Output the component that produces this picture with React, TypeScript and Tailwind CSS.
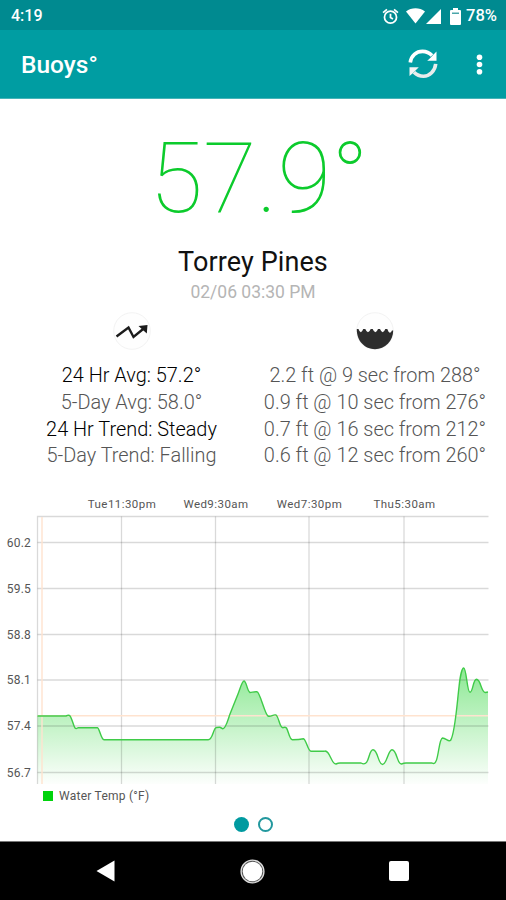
/**
 * Buoy detail screen
 * Current water temperature, averages, swell readings and a history chart
 */

import type { ReactNode } from 'react';

const averages = [
  { text: '24 Hr Avg: 57.2°', strong: true },
  { text: '5-Day Avg: 58.0°', strong: false },
  { text: '24 Hr Trend: Steady', strong: true },
  { text: '5-Day Trend: Falling', strong: false },
];

const swells = [
  { text: '2.2 ft @ 9 sec from 288°', strong: false },
  { text: '0.9 ft @ 10 sec from 276°', strong: false },
  { text: '0.7 ft @ 16 sec from 212°', strong: false },
  { text: '0.6 ft @ 12 sec from 260°', strong: false },
];

const xTicks = [
  { x: 121.5, label: 'Tue11:30pm' },
  { x: 215.5, label: 'Wed9:30am' },
  { x: 309, label: 'Wed7:30pm' },
  { x: 404, label: 'Thu5:30am' },
];

const yTicks = [
  { y: 52.5, label: '60.2' },
  { y: 98.5, label: '59.5' },
  { y: 144.5, label: '58.8' },
  { y: 190, label: '58.1' },
  { y: 236, label: '57.4' },
  { y: 282.5, label: '56.7' },
];

const tempLine =
  'M37.5 226H66C70 224 70.500 225.500 73 233C75 239 75.500 239.500 78 237.700H97.500C99.500 238 101 249.700 104 249.700H208' +
  'C213 250 213 238 216.500 237.500C220 237 220 237 222.500 238.700C226 239 228 229 230 224L238 204C240 199 242 191 244 191' +
  'C246.500 191 247 201 250 202.500C252 202.500 254 201.500 257 201.800C260 202 265 225 268 226C271 227.500 273 224 276 225' +
  'C279 227 279.500 238 283 237.700C284 237.200 285.500 237 286.500 238C288.500 241 289.500 250 292.500 249.700C297 249.700 300 249.500 303.500 248.700' +
  'C306 249 308 261.500 311 261.300H324C330 259 331 274.500 336 274C338 273 338 273 340 273H361C370 278 368 259.700 373 259.700' +
  'C378 259.700 378 274.500 382.500 274.500C387 274.500 388 259.700 392 259.700C397 259.700 397 274.500 401.500 274C404 273 404 273 406 273H432' +
  'C439 278 438 249 442.500 248C446 248 448 252 450.500 250.500C455 244 457 214 459 197C460 187 462 178 463.700 178' +
  'C466.500 178 467 202.300 470 202.300C473 202.300 473 189.300 476.500 189.300C481 189.300 481 203 485.500 202.500L488 202';

function AlarmIcon() {
  return (
    <svg width="17" height="17" viewBox="0 0 24 24" fill="none" stroke="#fff" strokeWidth="2.500">
      <circle cx="12" cy="13" r="8.500" />
      <path d="M12 8v5.500l3.500 2M1.500 6.500l5.500-4.500M22.500 6.500l-5.500-4.500" />
    </svg>
  );
}

function RefreshIcon() {
  return (
    <svg width="30" height="30" viewBox="0 0 30 30" fill="none">
      <path d="M2.300 13.500C3 6.500 8.500 2.400 14.500 2.400C18.500 2.400 21.500 3.800 24 6.500" stroke="#fff" strokeWidth="3.600" />
      <path d="M28.500 2.500V11.800H19.200L22 9.200L25.500 5.500Z" fill="#fff" />
      <path d="M27.700 14.800C27 22 21.500 27.300 15.500 27.300C11.500 27.300 8.500 25.800 6 23.300" stroke="#e8ecec" strokeWidth="3.600" />
      <path d="M1.500 27V18.300H10.800L8 21L4.500 24.500Z" fill="#f2f4f4" />
    </svg>
  );
}

function TrendIcon() {
  return (
    <svg width="38" height="38" viewBox="0 0 38 38" fill="none">
      <circle cx="19" cy="19" r="18.300" fill="#fefefe" stroke="#f3f3f3" />
      <path d="M3.500 24.500L15.500 15.500L20.500 25L32 15.500" stroke="#1b1b1b" strokeWidth="2.400" />
      <path d="M25.500 14L34.500 13L33.800 21.500Z" fill="#1b1b1b" />
    </svg>
  );
}

function WaveIcon() {
  return (
    <svg width="38" height="38" viewBox="0 0 38 38">
      <circle cx="19" cy="19" r="18.300" fill="#fefefe" stroke="#f3f3f3" />
      <path
        d="M.8 17L2.500 17Q4.800 23.500 7.200 17H9.300Q12 23.500 14.700 17H16.700Q19.400 23.500 22 17H24Q26.700 23.500 29.300 17H31.300Q33.500 23.500 36 18.500L37.200 18.500C37.300 29 29 37.200 19 37.200S.5 29 .8 17Z"
        fill="#2d2d2d"
      />
    </svg>
  );
}

interface ReadingsProps {
  icon: ReactNode;
  rows: { text: string; strong: boolean }[];
  className: string;
}

function Readings({ icon, rows, className }: ReadingsProps) {
  return (
    <div className={`flex flex-col items-center whitespace-nowrap ${className}`}>
      {icon}
      <div className="mt-[13px] text-center text-[19.9px] font-light leading-[26.8px]">
        {rows.map((row) => (
          <div key={row.text} className={row.strong ? 'text-black' : 'text-[#555]'}>
            {row.text}
          </div>
        ))}
      </div>
    </div>
  );
}

function TempChart() {
  return (
    <svg width="506" height="296" viewBox="0 0 506 296" className="block">
      <defs>
        <linearGradient id="tempFill" gradientUnits="userSpaceOnUse" x1="0" y1="178" x2="0" y2="294">
          <stop offset="0" stopColor="#00cc10" stopOpacity="0.450" />
          <stop offset="1" stopColor="#00cc10" stopOpacity="0.010" />
        </linearGradient>
      </defs>
      <path d={`${tempLine}V294H37.5Z`} fill="url(#tempFill)" />
      <g stroke="#000" strokeOpacity="0.150" strokeWidth="1.300">
        <path d="M37.500 294V26.500H488.500" fill="none" />
        {yTicks.map((tick) => (
          <line key={tick.label} x1="37.500" x2="488.500" y1={tick.y} y2={tick.y} />
        ))}
        {xTicks.map((tick) => (
          <line key={tick.label} x1={tick.x} x2={tick.x} y1="26.500" y2="294" />
        ))}
      </g>
      <path d="M42 27V294M37.500 225.700H488" stroke="#ffe3cf" strokeWidth="1.400" fill="none" />
      <path d={tempLine} fill="none" stroke="#3fcb48" strokeWidth="1.400" />
      <g fill="#555" fontSize="11.500">
        {xTicks.map((tick) => (
          <text key={tick.label} x={tick.x + 0.5} y="17.800" textAnchor="middle" letterSpacing="0.450">
            {tick.label}
          </text>
        ))}
        {yTicks.map((tick) => (
          <text key={tick.label} x="31" y={tick.y + 4} textAnchor="end" fontSize="12" letterSpacing="0.200">
            {tick.label}
          </text>
        ))}
      </g>
    </svg>
  );
}

export default function App() {
  return (
    <div className="flex h-[900px] w-[506px] flex-col overflow-hidden bg-white font-['Roboto',sans-serif]">
      <div className="flex h-[30px] items-center justify-between bg-[#008a90] pl-[11px] pr-[9px] pt-[2px] text-base font-medium text-white">
        <span>4:19</span>
        <div className="flex items-center">
          <AlarmIcon />
          <svg className="ml-[7px]" width="19" height="16" viewBox="0 0 19 16" fill="#fff">
            <path d="M0 3.500C5.500-.8 13.500-.8 19 3.500L9.500 15.500Z" />
          </svg>
          <svg className="ml-[1px]" width="15" height="15" viewBox="0 0 15 15" fill="#fff">
            <path d="M15 0V15H0Z" />
          </svg>
          <svg className="ml-[9px]" width="11" height="17" viewBox="0 0 11 17">
            <path d="M3 0H8V2H10Q11 2 11 3V16Q11 17 10 17H1Q0 17 0 16V3Q0 2 1 2H3Z" fill="#fff" />
            <path d="M2 4.500H9V6H2Z" fill="#4aa5a9" />
          </svg>
          <span className="ml-[5px] text-[16.5px]">78%</span>
        </div>
      </div>

      <div className="flex h-[69px] items-center justify-between border-b border-[#45b4b8] bg-[#009da2] pl-[21px] pr-[23px] text-white">
        <h1 className="pt-[3px] text-[24.5px] font-medium">Buoys°</h1>
        <div className="flex items-center">
          <RefreshIcon />
          <svg className="ml-[38px]" width="7" height="21" viewBox="0 0 7 21" fill="#fff">
            <circle cx="3.500" cy="3.200" r="2.800" />
            <circle cx="3.500" cy="10.500" r="2.800" />
            <circle cx="3.500" cy="17.800" r="2.800" />
          </svg>
        </div>
      </div>

      <div className="flex flex-col items-center pl-3 pt-[30px]">
        <div className="h-[100px] text-[98px] font-thin leading-[100px] text-[#0ccb2c]">57.9°</div>
      </div>
      <div className="flex flex-col items-center">
        <h2 className="mt-[17px] text-[27px] leading-8 tracking-[0.1px] text-[#111]">Torrey Pines</h2>
        <p className="mt-[2px] text-[17.5px] leading-6 text-[#b5b5b5]">02/06 03:30 PM</p>
      </div>

      <div className="mt-2 flex">
        <Readings icon={<TrendIcon />} rows={averages} className="w-[263px]" />
        <Readings icon={<WaveIcon />} rows={swells} className="w-[224px]" />
      </div>

      <div className="mt-5">
        <TempChart />
      </div>
      <div className="flex h-[19px] items-center pl-[43px]">
        <div className="size-[10px] bg-[#00d30c]" />
        <span className="ml-[6px] text-[12px] tracking-[0.25px] text-[#555]">Water Temp (°F)</span>
      </div>

      <div className="mt-auto flex h-[34px] items-center justify-center gap-[9px]">
        <div className="size-[15px] rounded-full bg-[#009aa0]" />
        <div className="size-[15px] rounded-full border-[2.5px] border-[#22989e]" />
      </div>
      <div className="flex h-[59px] shrink-0 items-center justify-between border-t border-[#777] bg-black pl-24 pr-[97px]">
        <svg width="19" height="22" viewBox="0 0 19 22" fill="#fff">
          <path d="M18.500.5V21.500L.5 11Z" />
        </svg>
        <svg width="25" height="25" viewBox="0 0 25 25" fill="#fff">
          <circle cx="12.500" cy="12.500" r="11.400" fill="#555" stroke="#ddd" strokeWidth="1.400" />
          <circle cx="12.500" cy="12.500" r="9.800" />
        </svg>
        <div className="size-5 rounded-[2px] bg-white" />
      </div>
    </div>
  );
}
